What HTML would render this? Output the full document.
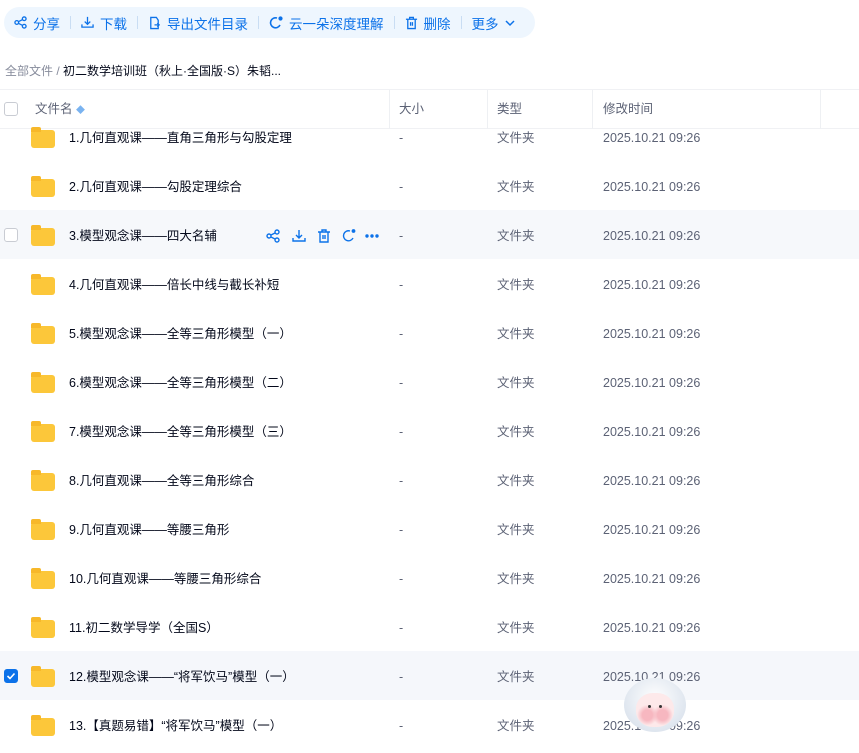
<!DOCTYPE html>
<html><head><meta charset="utf-8"><style>
*{margin:0;padding:0;box-sizing:border-box}
body{width:859px;height:729px;overflow:hidden;background:#fff;font-family:"Liberation Sans","Noto Sans CJK SC",sans-serif;position:relative;color:#03081a}
.tb{position:absolute;left:4px;top:7px;width:531px;height:31px;background:#eef6fe;border-radius:16px;display:flex;align-items:center;padding-left:10px;font-size:13.5px;color:#0c72e9}
.tb span{display:flex;align-items:center;gap:6px}
.sep{width:1px;height:13px;background:#c9ddf3;margin:0 10px}
.bc{position:absolute;left:5px;top:62px;font-size:12px;color:#03081a}
.bc i{font-style:normal;color:#878c9c}
.hd{position:absolute;left:0;top:89px;width:859px;height:40px;border-top:1px solid #f0f1f4;border-bottom:1px solid #f0f1f4;font-size:12.5px;color:#5c6275}
.hd div{position:absolute;top:0;line-height:39px}
.vl{position:absolute;top:0;width:1px;height:39px;background:#eef0f3}
.row{position:absolute;left:0;width:859px;height:49px;font-size:12.5px;color:#03081a}
.row div{position:absolute;top:0;line-height:53px;white-space:nowrap}
.row .s,.row .t,.row .d{color:#5c6275}
.row .fold{top:18px;line-height:normal;width:24px;height:18px;left:31px;background:#fcc73a;border-radius:3px}
.fold:before{content:"";position:absolute;left:0;top:-3px;width:10px;height:5px;background:#f7b82a;border-radius:2px 2px 0 0}
.row .cb,.hd .cb{left:4px;top:18px;line-height:normal;width:14px;height:14px;border:1px solid #c9ccd3;border-radius:3px;background:#fff}
</style></head><body>
<div class="tb">
<span><svg width="13" height="13" viewBox="0 0 14 14" fill="none" stroke="#0c72e9" stroke-width="1.4"><circle cx="3" cy="7" r="2"/><circle cx="11" cy="3" r="2"/><circle cx="11" cy="11" r="2"/><path d="M5 6l4-2M5 8l4 2"/></svg>分享</span><i class="sep"></i>
<span><svg width="13" height="13" viewBox="0 0 14 14" fill="none" stroke="#0c72e9" stroke-width="1.4"><path d="M7 1v8M4 6l3 3 3-3M1 9v3h12V9"/></svg>下载</span><i class="sep"></i>
<span><svg width="13" height="14" viewBox="0 0 14 14" fill="none" stroke="#0c72e9" stroke-width="1.4"><path d="M9 1H3v12h8V4zM7 9h5M10 7l2 2-2 2"/></svg>导出文件目录</span><i class="sep"></i>
<span><svg width="14" height="14" viewBox="0 0 14 14" fill="none" stroke="#0c72e9" stroke-width="1.6"><path d="M11 9A5 5 0 1 1 8 2"/><circle cx="11.5" cy="2.5" r="1.3" fill="#0c72e9"/></svg>云一朵深度理解</span><i class="sep"></i>
<span><svg width="13" height="14" viewBox="0 0 14 14" fill="none" stroke="#0c72e9" stroke-width="1.4"><path d="M1 3h12M5 3V1h4v2M3 3v10h8V3M6 6v4M8 6v4"/></svg>删除</span><i class="sep"></i>
<span>更多 <svg width="10" height="10" viewBox="0 0 10 10" fill="none" stroke="#0c72e9" stroke-width="1.5"><path d="M1 3l4 4 4-4"/></svg></span>
</div>
<div class="bc"><i>全部文件 / </i>初二数学培训班（秋上·全国版·S）朱韬...</div>
<div class="hd">
<div class="cb" style="top:12px"></div>
<div style="left:35px">文件名 <span style="color:#7ab3f0;font-size:9px">◆</span></div>
<div class="vl" style="left:389px"></div><div style="left:399px">大小</div>
<div class="vl" style="left:487px"></div><div style="left:497px">类型</div>
<div class="vl" style="left:592px"></div><div style="left:603px">修改时间</div>
<div class="vl" style="left:820px"></div>
</div>
<div class="row" style="top:112px"><div class="fold"></div><div style="left:69px">1.几何直观课——直角三角形与勾股定理</div><div class="s" style="left:399px">-</div><div class="t" style="left:497px">文件夹</div><div class="d" style="left:603px">2025.10.21 09:26</div></div>
<div class="row" style="top:161px"><div class="fold"></div><div style="left:69px">2.几何直观课——勾股定理综合</div><div class="s" style="left:399px">-</div><div class="t" style="left:497px">文件夹</div><div class="d" style="left:603px">2025.10.21 09:26</div></div>
<div class="row" style="top:210px;background:#f6f8fb"><div class="cb"></div><div class="fold"></div><div style="left:69px">3.模型观念课——四大名辅</div>
<div style="left:266px;top:18px;line-height:normal"><svg width="120" height="16" viewBox="0 0 120 16" fill="none" stroke="#0c72e9" stroke-width="1.4"><circle cx="3" cy="8" r="2"/><circle cx="11" cy="4" r="2"/><circle cx="11" cy="12" r="2"/><path d="M5 7l4-2M5 9l4 2"/><path d="M33 2v8M30 7l3 3 3-3M27 10v3h12v-3"/><path d="M52 4h12M56 4V2h4v2M54 4v10h8V4M57 7v4M59 7v4"/><path d="M87 10A5 5 0 1 1 84 3"/><circle cx="87.5" cy="3" r="1.2" fill="#0c72e9"/><circle cx="101" cy="8" r="1" fill="#0c72e9"/><circle cx="106" cy="8" r="1" fill="#0c72e9"/><circle cx="111" cy="8" r="1" fill="#0c72e9"/></svg></div>
<div class="s" style="left:399px">-</div><div class="t" style="left:497px">文件夹</div><div class="d" style="left:603px">2025.10.21 09:26</div></div>
<div class="row" style="top:259px"><div class="fold"></div><div style="left:69px">4.几何直观课——倍长中线与截长补短</div><div class="s" style="left:399px">-</div><div class="t" style="left:497px">文件夹</div><div class="d" style="left:603px">2025.10.21 09:26</div></div>
<div class="row" style="top:308px"><div class="fold"></div><div style="left:69px">5.模型观念课——全等三角形模型（一）</div><div class="s" style="left:399px">-</div><div class="t" style="left:497px">文件夹</div><div class="d" style="left:603px">2025.10.21 09:26</div></div>
<div class="row" style="top:357px"><div class="fold"></div><div style="left:69px">6.模型观念课——全等三角形模型（二）</div><div class="s" style="left:399px">-</div><div class="t" style="left:497px">文件夹</div><div class="d" style="left:603px">2025.10.21 09:26</div></div>
<div class="row" style="top:406px"><div class="fold"></div><div style="left:69px">7.模型观念课——全等三角形模型（三）</div><div class="s" style="left:399px">-</div><div class="t" style="left:497px">文件夹</div><div class="d" style="left:603px">2025.10.21 09:26</div></div>
<div class="row" style="top:455px"><div class="fold"></div><div style="left:69px">8.几何直观课——全等三角形综合</div><div class="s" style="left:399px">-</div><div class="t" style="left:497px">文件夹</div><div class="d" style="left:603px">2025.10.21 09:26</div></div>
<div class="row" style="top:504px"><div class="fold"></div><div style="left:69px">9.几何直观课——等腰三角形</div><div class="s" style="left:399px">-</div><div class="t" style="left:497px">文件夹</div><div class="d" style="left:603px">2025.10.21 09:26</div></div>
<div class="row" style="top:553px"><div class="fold"></div><div style="left:69px">10.几何直观课——等腰三角形综合</div><div class="s" style="left:399px">-</div><div class="t" style="left:497px">文件夹</div><div class="d" style="left:603px">2025.10.21 09:26</div></div>
<div class="row" style="top:602px"><div class="fold"></div><div style="left:69px">11.初二数学导学（全国S）</div><div class="s" style="left:399px">-</div><div class="t" style="left:497px">文件夹</div><div class="d" style="left:603px">2025.10.21 09:26</div></div>
<div class="row" style="top:651px;background:#f5f7fb"><div class="cb" style="background:#0c72e9;border-color:#0c72e9"><svg width="12" height="12" viewBox="0 0 12 12" style="position:absolute;left:0;top:0" fill="none" stroke="#fff" stroke-width="1.6"><path d="M2.5 6l2.5 2.5 4.5-5"/></svg></div><div class="fold"></div><div style="left:69px">12.模型观念课——“将军饮马”模型（一）</div><div class="s" style="left:399px">-</div><div class="t" style="left:497px">文件夹</div><div class="d" style="left:603px">2025.10.21 09:26</div></div>
<div class="row" style="top:700px"><div class="fold"></div><div style="left:69px">13.【真题易错】“将军饮马”模型（一）</div><div class="s" style="left:399px">-</div><div class="t" style="left:497px">文件夹</div><div class="d" style="left:603px">2025.10.21 09:26</div></div>
<div style="position:absolute;left:624px;top:678px;width:62px;height:54px;border-radius:50%;background:radial-gradient(circle at 50% 40%,#fff,#dfe6ef 70%,#c9d3e0)"></div>
<div style="position:absolute;left:636px;top:693px;width:38px;height:34px;border-radius:45%;background:radial-gradient(circle at 30% 65%,#f7b7c0 15%,transparent 30%),radial-gradient(circle at 70% 65%,#f7b7c0 15%,transparent 30%),#fde9ea"></div>
<div style="position:absolute;left:648px;top:705px;width:3px;height:3px;border-radius:50%;background:#333"></div>
<div style="position:absolute;left:659px;top:705px;width:3px;height:3px;border-radius:50%;background:#333"></div>
</body></html>
